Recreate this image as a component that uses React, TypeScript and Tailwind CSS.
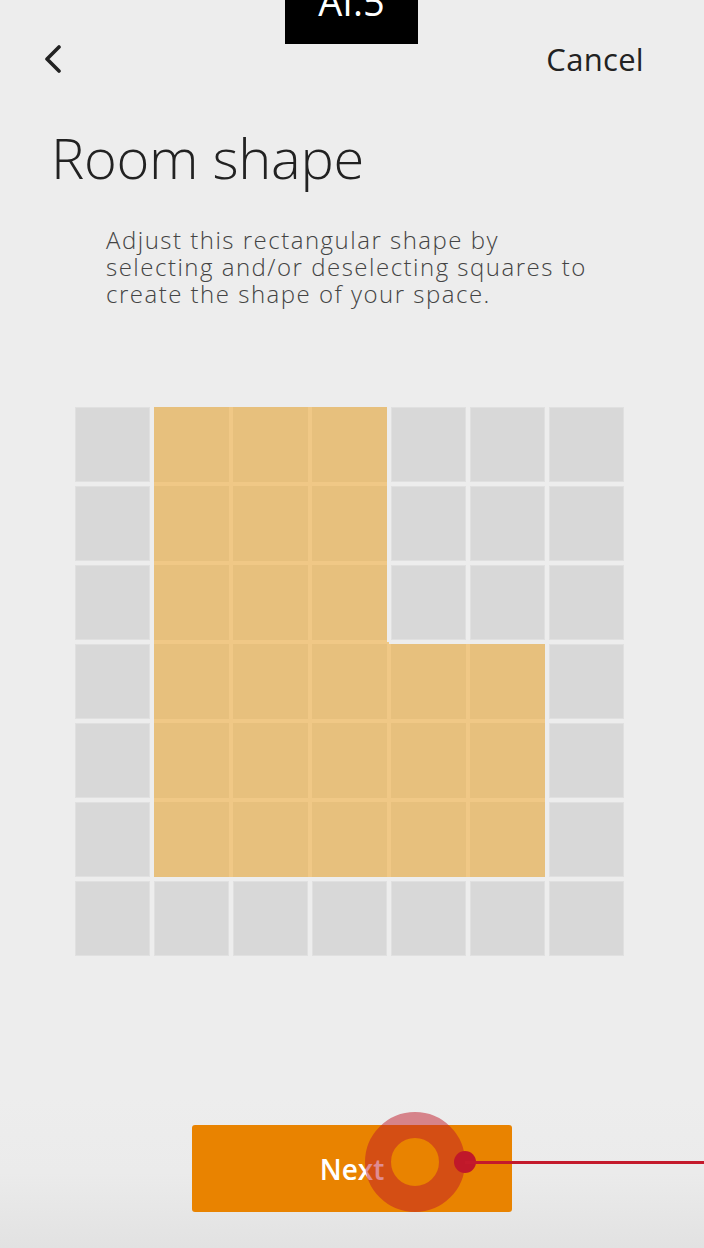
const ROWS = [
  [0, 1, 1, 1, 0, 0, 0],
  [0, 1, 1, 1, 0, 0, 0],
  [0, 1, 1, 1, 0, 0, 0],
  [0, 1, 1, 1, 1, 1, 0],
  [0, 1, 1, 1, 1, 1, 0],
  [0, 1, 1, 1, 1, 1, 0],
  [0, 0, 0, 0, 0, 0, 0],
]

const on = (r: number, c: number) => !!ROWS[r]?.[c]

const Cell = ({ r, c }: { r: number; c: number }) => {
  if (!on(r, c)) {
    return <div className="h-[75px] bg-[#d8d8d8] border border-[#e0e0e0]"></div>
  }
  // selected squares reach into the gap toward selected neighbours
  const cls = [
    'h-auto bg-[#e7c07d] border-[#f0c886]',
    on(r, c + 1) ? '-mr-[2px] border-r-2' : '',
    on(r, c - 1) ? '-ml-[2px] border-l-2' : '',
    on(r + 1, c) ? '-mb-[2px] border-b-2' : '',
    on(r - 1, c) ? '-mt-[2px] border-t-2' : '',
  ].join(' ')
  return <div className={cls}></div>
}

const App = () => {
  return (
    <div
      className="relative w-[704px] h-[1248px] overflow-hidden bg-[#ededed] flex flex-col text-[#222]"
      style={{ fontFamily: '"Open Sans", "Noto Sans", sans-serif' }}
    >
      {/* annotation tag */}
      <div className="absolute left-[285px] top-0 w-[133px] h-[44px] bg-black overflow-hidden flex justify-center">
        <span className="text-white text-[38px] leading-none -mt-[18px]">AI.5</span>
      </div>

      {/* header */}
      <div className="flex items-center justify-between pl-[44px] pr-[60px] pt-[42px] h-[76px]">
        <svg width="18" height="28" viewBox="0 0 18 28" fill="none">
          <polyline points="15,2 3,14 15,26" stroke="#222" strokeWidth="3.6" strokeLinecap="round" strokeLinejoin="round" />
        </svg>
        <button className="text-[31px] text-[#222] leading-none tracking-[0.3px]">Cancel</button>
      </div>

      <h1 className="pl-[51px] mt-[53px] text-[56px] font-light leading-none tracking-[-0.3px]">Room shape</h1>

      <p className="pl-[106px] pr-[40px] mt-[41px] text-[24px] leading-[27px] text-[#444] font-light tracking-[1.5px]">
        Adjust this rectangular shape by
        <br />
        selecting and/or deselecting squares to
        <br />
        create the shape of your space.
      </p>

      {/* room grid */}
      <div className="mt-[100px] mx-[75px] grid grid-cols-7 gap-[4px] w-[549px]">
        {ROWS.map((row, r) => row.map((_, c) => <Cell key={`${r}-${c}`} r={r} c={c} />))}
      </div>

      <div className="flex-1"></div>

      <div className="h-[150px] flex justify-center pt-[27px] bg-gradient-to-b from-[#ededed] via-[#ebebeb] to-[#e2e2e2]">
        <button className="w-[320px] h-[87px] rounded-[3px] bg-[#e98300] text-white text-[28px] font-semibold">
          Next
        </button>
      </div>

      {/* tap marker */}
      <div className="absolute left-[365px] top-[1112px] w-[100px] h-[100px] rounded-full border-[26px] border-[rgba(191,25,39,0.5)]"></div>
      <div className="absolute left-[454px] top-[1151px] w-[22px] h-[22px] rounded-full bg-[#c0182a]"></div>
      <div className="absolute left-[465px] top-[1161px] w-[239px] h-[3px] bg-[#c41a2c]"></div>
    </div>
  )
}

export default App
